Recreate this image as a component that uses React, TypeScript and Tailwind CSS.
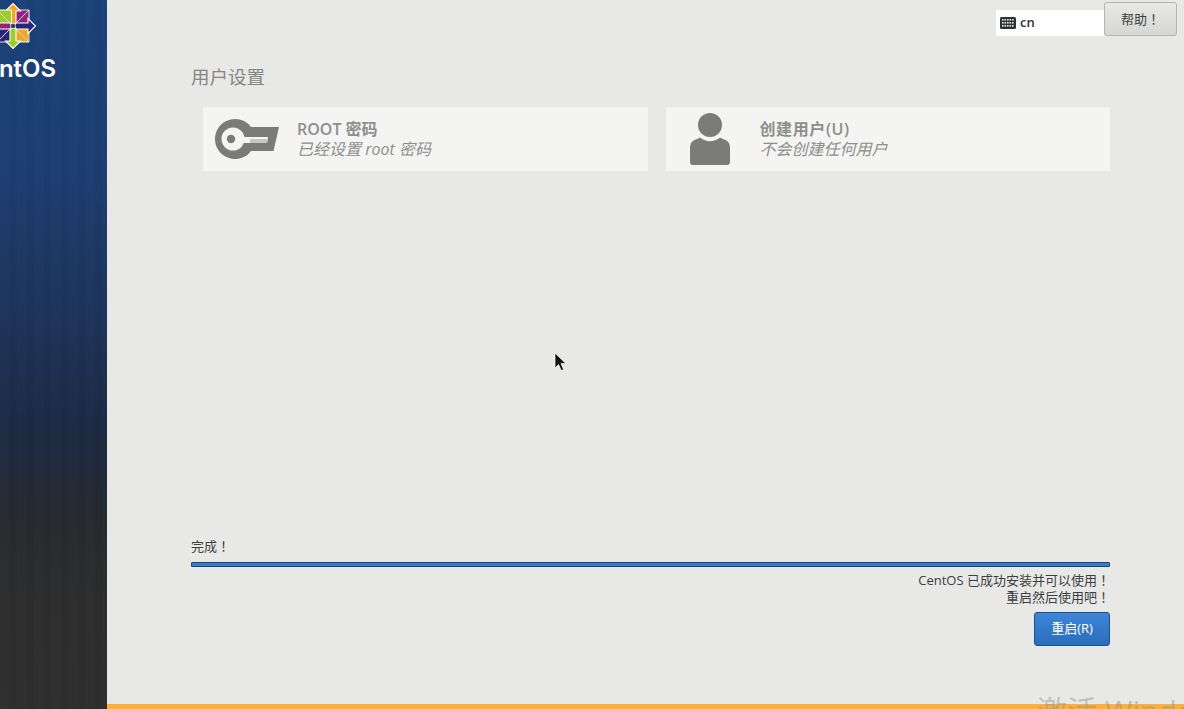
const FONT = "font-['Open_Sans','Noto_Sans_CJK_SC',sans-serif] [text-spacing-trim:space-all]";

function Bang() {
  return <span className="font-['Noto_Sans_CJK_TC',sans-serif]">！</span>;
}

function Logo() {
  const q = [0, 90, 180, 270];
  const sq = ["#932279", "#efa724", "#262577", "#9ccd2a"];
  const ar = ["#efa724", "#262577", "#9ccd2a", "#932279"];
  return (
    <svg width="50" height="50" viewBox="-25 -25 50 50" className="block shrink-0">
      {q.map((a, i) => (
        <g key={a} transform={`rotate(${a})`}>
          <polygon points="1.5,-1.5 16,-16 16,-1.5" fill={sq[i]} stroke="#fff" strokeWidth="1" />
          <polygon points="1.5,-1.5 16,-16 1.5,-16" fill={sq[i]} stroke="#d8d8e8" strokeWidth="1" />
          <polygon points="-3,-3 -3,-15 -7.5,-15 0,-22.5 7.5,-15 3,-15 3,-3 0,0" fill={ar[i]} stroke="#fff" strokeWidth="1.1" />
        </g>
      ))}
      <rect x="-2.2" y="-2.2" width="4.4" height="4.4" fill="#1d3a66" stroke="#fff" strokeWidth="0.7" />
    </svg>
  );
}

function KeyIcon() {
  return (
    <svg width="64" height="40" viewBox="0 0 64 40" className="block shrink-0">
      <path d="M20 0a20 20 0 0 1 16 8H64L58.500 32H36A20 20 0 1 1 20 0Z" fill="#7b7b79" />
      <circle cx="18" cy="20" r="11.500" fill="#f4f4f2" />
      <circle cx="16" cy="20" r="4.200" fill="#7b7b79" />
      <polygon points="26,18 53,18 52,24 26,24" fill="#f4f4f2" />
      <polygon points="35,20 52.600,20 52,24 35,24" fill="#c6c6c4" />
    </svg>
  );
}

function UserIcon() {
  return (
    <svg width="40" height="52" viewBox="0 0 40 52" className="block shrink-0">
      <circle cx="20" cy="12" r="12" fill="#7b7b79" />
      <path d="M0 34Q0 28 7 26L10 24.500Q20 32 30 24.500L33 26Q40 28 40 34V49Q40 52 37 52H3Q0 52 0 49Z" fill="#7b7b79" />
    </svg>
  );
}

function KeyboardIcon() {
  return (
    <svg width="16" height="12" viewBox="0 0 16 12" className="block shrink-0">
      <rect width="16" height="12" rx="1.500" fill="#2e3436" />
      {[2, 5, 8].map((y) =>
        [2, 4.5, 7, 9.5, 12].map((x) => (
          <rect key={`${x}-${y}`} x={x} y={y} width="1.6" height="1.6" fill="#e8e8e8" />
        )),
      )}
    </svg>
  );
}

function Spoke({ icon, title, sub, left, titleClass }: { icon: React.ReactNode; title: string; sub: string; left: string; titleClass?: string }) {
  return (
    <div className="flex h-[64px] items-center bg-[#f4f4f2]">
      <div className={left}>{icon}</div>
      <div className="flex flex-col">
        <div className={`text-[16px] leading-[20px] font-semibold text-[#8e8e8c] ${titleClass ?? ""}`}>{title}</div>
        <div className="text-[16px] leading-[21px] italic text-[#8e8e8c]">{sub}</div>
      </div>
    </div>
  );
}

export default function App() {
  return (
    <div className={`relative flex h-[709px] w-[1184px] overflow-hidden bg-[#e8e8e7] ${FONT}`}>
      <aside className="flex w-[107px] shrink-0 flex-col overflow-hidden bg-[repeating-linear-gradient(90deg,rgba(255,255,255,0.008)_0px,rgba(255,255,255,0.008)_9px,rgba(0,0,0,0.015)_11px,rgba(0,0,0,0.015)_17px),linear-gradient(180deg,#1a4279_0%,#1c3d70_25%,#1d3359_45%,#1c2a44_60%,#272a2e_74%,#2d2d2d_85%,#2e2e2e_100%)]">
        <div className="ml-[-12px] mt-[1px]">
          <Logo />
        </div>
        <div className="ml-[-33px] mt-[5px] font-['Inter',sans-serif] text-[24px] leading-[26px] font-semibold whitespace-nowrap text-white">CentOS</div>
      </aside>

      <main className="flex min-w-0 flex-1 flex-col">
        <header className="flex h-[36px] shrink-0 items-start justify-end pr-[7px] pt-[2px]">
          <div className="mt-[8px] flex h-[26px] w-[108px] items-center gap-[4px] bg-white pl-[4px] text-[13px] font-semibold text-[#2e3436]">
            <KeyboardIcon />
            <span>cn</span>
          </div>
          <button className="h-[34px] w-[73px] rounded-[3px] border border-[#b4b4b2] bg-gradient-to-b from-[#e8e8e6] to-[#d6d6d4] text-[13px] text-[#3a3f41]">
            帮助<Bang />
          </button>
        </header>

        <div className="flex flex-1 flex-col pl-[84px] pr-[74px]">
          <h1 className="mt-[30px] text-[18.5px] leading-[22px] font-normal text-[#858585]">用户设置</h1>
          <div className="ml-[12px] mt-[19px] grid grid-cols-2 gap-[18px]">
            <Spoke icon={<KeyIcon />} title="ROOT 密码" sub="已经设置 root 密码" left="ml-[12px] mr-[18px]" />
            <Spoke icon={<UserIcon />} title="创建用户(U)" titleClass="tracking-[0.6px]" sub="不会创建任何用户" left="ml-[24px] mr-[30px]" />
          </div>

          <div className="mt-auto h-[18px] text-[13px] leading-[18px] text-[#3a3f41]">完成<Bang /></div>
          <div className="mt-[7px] h-[5px] rounded-[1px] border border-[#1c4272] bg-[#3a7cc8]" />
          <div className="mt-[4px] text-right text-[13px] leading-[17px] text-[#3a3f41]">
            <div className="h-[17px]">CentOS 已成功安装并可以使用<Bang /></div>
            <div className="h-[17px]">重启然后使用吧<Bang /></div>
          </div>
          <div className="mt-[7px] mb-[58px] flex justify-end">
            <button className="h-[34px] w-[76px] rounded-[3px] border border-[#1c4f8c] bg-gradient-to-b from-[#3f86d6] to-[#2a6dbd] text-[13px] text-white">
              重启(R)
            </button>
          </div>
        </div>

        <div className="h-[5px] shrink-0 bg-[#fcaf3e]" />
      </main>

      <svg width="14" height="20" viewBox="0 0 14 20" className="absolute left-[554px] top-[352px]">
        <path d="M1 1V16L4.600 12.600L7.200 18.600L9.600 17.400L7 11.600H11.800Z" fill="#111" stroke="#fff" strokeWidth="0.7" />
      </svg>
      <div className="absolute left-[1037px] top-[693px] text-[30px] leading-[36px] whitespace-nowrap text-[#8c8c8c]/45">激活 Windows</div>
    </div>
  );
}
